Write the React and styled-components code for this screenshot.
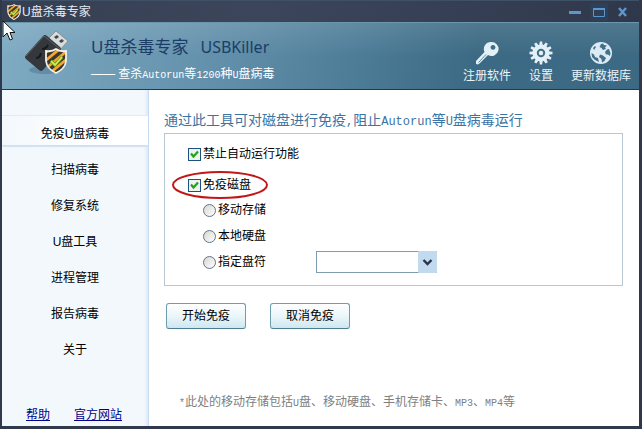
import { useState } from 'react';
import styled, { createGlobalStyle } from 'styled-components';

const GlobalStyle = createGlobalStyle`
	* {
		box-sizing: border-box;
	}

	body {
		margin: 0;
		background: #2f394b;
		color: #000;
		font-family: 'Liberation Sans', 'Noto Sans CJK SC', sans-serif;
		font-size: 12px;
		line-height: 16px;
	}
`;

const Frame = styled.div`
	display: flex;
	flex-direction: column;
	min-height: 100vh;
	border: solid #2f394b;
	border-width: 0 3px 3px 2px;
`;

const TitleBar = styled.div`
	display: flex;
	align-items: center;
	gap: 1px;
	height: 22px;
	padding: 0 7px 0 5px;
	border-top: 1px solid #3f5166;
	background: linear-gradient(90deg, #363f52, #3d455a 40%, #363e53 75%, #2f384b);
	color: #e4edf6;
`;

const WindowButtons = styled.div`
	display: flex;
	gap: 6px;
	margin-left: auto;
`;

const WindowButton = styled.button`
	display: flex;
	align-items: center;
	justify-content: center;
	width: 18px;
	height: 18px;
	padding: 0;
	border: 0;
	background: ${({ $shaded }) => ($shaded ? '#303f58' : 'transparent')};
`;

const Banner = styled.header`
	display: flex;
	align-items: flex-start;
	height: 68px;
	padding: 6px 8px 0 20px;
	border-top: 1px solid #6b98a8;
	border-bottom: 1px solid #1e3a4e;
	background:
		linear-gradient(rgb(255 255 255 / 10%), rgb(255 255 255 / 0%) 50%),
		linear-gradient(100deg, #7fabc3, #5f8ca7 38%, #4d7c97 56%, #3c6983 74%);
`;

const BannerText = styled.div`
	display: flex;
	flex-direction: column;
	gap: 9px;
	margin: 8px 0 0 21px;
`;

const ProductName = styled.h1`
	display: flex;
	gap: 12px;
	margin: 0;
	color: #1b3d68;
	font-family: 'Noto Sans', 'Noto Sans CJK SC', sans-serif;
	font-size: 16px;
	font-weight: 400;
	line-height: 20px;
`;

const ChineseName = styled.span`
	font-size: 17px;
`;

const Slogan = styled.p`
	margin: 0;
	color: #fff;
`;

const Latin = styled.span`
	font-family: 'Liberation Mono', monospace;
	font-size: ${({ $large }) => ($large ? 12 : 10)}px;
	line-height: 1;
`;

const Tools = styled.nav`
	display: flex;
	gap: 18px;
	margin: 12px 0 0 auto;
`;

const ToolButton = styled.button`
	display: flex;
	flex-direction: column;
	align-items: center;
	gap: 3px;
	padding: 0;
	border: 0;
	background: none;
	color: #eaf4fa;
	font: inherit;
`;

const Main = styled.div`
	display: flex;
	flex: 1;
`;

const Sidebar = styled.aside`
	display: flex;
	flex: none;
	flex-direction: column;
	width: 147px;
	padding-top: 26px;
	border-right: 1px solid #c6dcf2;
	background: linear-gradient(270deg, #dceaf8, #f3f8fc 4px);
`;

const Menu = styled.ul`
	display: flex;
	flex-direction: column;
	gap: 6px;
	margin: 0;
	padding: 0;
	list-style: none;
`;

const MenuItem = styled.button`
	display: block;
	width: 100%;
	height: 30px;
	padding: 7px 0 0;
	border: solid transparent;
	border-width: 0 0 1px;
	border-bottom-color: ${({ $active }) => ($active ? '#cfe0f4' : 'transparent')};
	background: ${({ $active }) => ($active ? 'linear-gradient(90deg, #f3f8fc, #fff 60%)' : 'none')};
	box-shadow: ${({ $active }) => ($active ? '0 -1px #e3ebf2, 0 2px 1px -1px #d3e3f5' : 'none')};
	color: #000;
	font: inherit;
	text-align: center;
`;

const HelpLinks = styled.div`
	display: flex;
	gap: 24px;
	margin-top: auto;
	padding: 0 0 3px 24px;

	a {
		color: #00008b;
	}
`;

const Content = styled.main`
	flex: 1;
	padding: 20px 16px 15px 15px;
	background: #fff;
`;

const Heading = styled.h2`
	margin: 0 0 3px;
	color: #3b74a3;
	font-size: 14px;
	font-weight: 400;
	line-height: 20px;
`;

const Options = styled.div`
	display: flex;
	flex-direction: column;
	padding: 12px 23px;
	border: 1px solid #b9c7d3;
`;

const Option = styled.label`
	display: flex;
	align-items: center;
	gap: 2px;
`;

const CircledOption = styled.div`
	position: relative;
	align-self: flex-start;
	margin: 15px 0 6px;
`;

const RedCircle = styled.svg`
	position: absolute;
	left: -17px;
	top: -7px;
	pointer-events: none;
`;

const Checkbox = styled.input`
	appearance: none;
	width: 13px;
	height: 13px;
	margin: 0;
	border: 1px solid #1c5180;
	background: #eef3ee;

	&:checked {
		background: #eef3ee
			url("data:image/svg+xml,%3Csvg xmlns='http://www.w3.org/2000/svg' width='11' height='11'%3E%3Cpath d='M2 4.500l2.500 3 4.500-5' fill='none' stroke='%2321a121' stroke-width='2.2'/%3E%3C/svg%3E");
	}
`;

const DiskOptions = styled.div`
	display: flex;
	flex-direction: column;
	gap: 4px;
	padding-left: 15px;
`;

const DiskRow = styled.div`
	display: flex;
	align-items: center;
	height: 22px;
`;

const Radio = styled.input`
	appearance: none;
	width: 13px;
	height: 13px;
	margin: 0;
	border: 1px solid #5f7688;
	border-radius: 50%;
	background: linear-gradient(135deg, #d6d6d1, #fff);

	&:checked {
		background: radial-gradient(#21a121 3px, #f0f0ee 4px);
	}
`;

const DriveField = styled.div`
	display: grid;
	width: 121px;
	margin-left: 50px;
`;

const DriveSelect = styled.select`
	grid-area: 1 / 1;
	appearance: none;
	height: 22px;
	border: 1px solid #7f9db0;
	border-radius: 0;
	background: #fff;
`;

const DriveArrow = styled.svg`
	grid-area: 1 / 1;
	justify-self: end;
	pointer-events: none;
`;

const Actions = styled.div`
	display: flex;
	gap: 24px;
	margin-top: 17px;
	padding-left: 2px;
`;

const ActionButton = styled.button`
	width: 80px;
	height: 26px;
	padding: 0;
	border: 1px solid #6c9fae;
	border-bottom-color: #4d7e92;
	border-radius: 3px;
	background: linear-gradient(#fff, #eaf6fa 50%, #cfe7f0);
	color: #000;
	font: inherit;
`;

const Note = styled.p`
	margin: 65px 0 0 15px;
	color: #808080;
`;

const Pointer = styled.svg`
	position: absolute;
	left: 2px;
	top: 20px;
	pointer-events: none;
`;

const SHIELD = 'M0 2Q6 3 10 0Q14 3 20 2V12Q19 20 10 24Q1 20 0 12Z';

function Shield({ id }) {
	return (
		<>
			<clipPath id={id}>
				<path d={SHIELD} />
			</clipPath>
			<g clipPath={`url(#${id})`}>
				<path d='M0 0h20v24H0z' fill='#f5a82c' />
				<path d='M-2 9L11-2M-2 17L22-3M-2 25L22 5M4 28L22 13' stroke='#3c3830' strokeWidth='3.4' />
			</g>
			<path d='M5 12l4 4 7-8' fill='none' stroke='#6c9a20' strokeWidth='3.4' />
			<path d='M5 12l4 4 7-8' fill='none' stroke='#cbee58' strokeWidth='1.8' />
			<path d={SHIELD} fill='none' stroke='#f2f2ea' strokeWidth='1.8' />
		</>
	);
}

function UsbLogo() {
	return (
		<svg width='48' height='48' viewBox='0 0 48 48' aria-hidden='true'>
			<ellipse cx='23' cy='41' rx='16' ry='4' fill='#2f566c' opacity='.3' />
			<path d='M25 11L34 2L46 12L37 22Z' fill='#d9dcdd' stroke='#8a9296' />
			<path d='M32 8l3-2 2 2-3 2zM37 12l3-2 2 2-3 2z' fill='#424649' />
			<path d='M4 26L21 7Q23 5 25 7L38 18Q40 20 38 22L21 41Q19 43 17 41L4 30Q2 28 4 26Z' fill='#34373b' />
			<path d='M4 27L22 7L38 20' fill='none' stroke='#5d6468' />
			<path d='M14 29q4 0 5-5M20 20q4 0 6-4' fill='none' stroke='#17191c' strokeWidth='2' />
			<g transform='translate(24 20)'>
				<Shield id='logo-shield' />
			</g>
		</svg>
	);
}

function KeyIcon() {
	return (
		<svg width='24' height='24' viewBox='0 0 24 24' aria-hidden='true'>
			<path
				fill='#e3f0f7'
				fillRule='evenodd'
				d='M16 1a7 7 0 1 1-3 13L5 22L3 23.500L1 23V20L9.500 11A7 7 0 0 1 16 1ZM18 4a2.400 2.400 0 1 0 .01 0Z'
			/>
			<path d='M3.500 21.500L11 13.500' stroke='#5f8ba3' />
		</svg>
	);
}

function GearIcon() {
	const teeth = Array.from({ length: 12 }, (_, i) => i * 30);

	return (
		<svg width='24' height='24' viewBox='-12 -12 24 24' aria-hidden='true'>
			{teeth.map((angle) => (
				<path key={angle} d='M-1.8-7L-1.2-11.5H1.2L1.8-7Z' fill='#e3f0f7' transform={`rotate(${angle})`} />
			))}
			<circle r='8.4' fill='#e3f0f7' />
			<circle r='3.2' fill='none' stroke='#41708a' strokeWidth='2' />
		</svg>
	);
}

function GlobeIcon() {
	return (
		<svg width='24' height='24' viewBox='0 0 24 24' aria-hidden='true'>
			<circle cx='12' cy='12' r='11' fill='#dcebf3' />
			<path
				fill='#426f8a'
				d='M12 3L14 2.500L15 4L18 4.500L16 6.500L17 8L14 9L12.500 7L10.500 6ZM2.500 12L5 13.500L6 16L9 17L10 21L6 19L3 16ZM18 8.500L20 8L21.500 12L21 15L19 13.500L17 13.500L16 11ZM11 13.500L14 14.500L17 17L15.500 20L13 21.500L12.500 18L10 16ZM4 7L6 5L7 6L5 9Z'
			/>
		</svg>
	);
}

const menu = ['免疫U盘病毒', '扫描病毒', '修复系统', 'U盘工具', '进程管理', '报告病毒', '关于'];
const disks = ['移动存储', '本地硬盘', '指定盘符'];

export default function App() {
	const [active, setActive] = useState(menu[0]);

	return (
		<Frame>
			<GlobalStyle />
			<TitleBar>
				<svg width='14' height='16' viewBox='-1 -1 22 26' aria-hidden='true'>
					<Shield id='title-shield' />
				</svg>
				<span>U盘杀毒专家</span>
				<WindowButtons>
					<WindowButton aria-label='最小化'>
						<svg width='12' height='12'>
							<path d='M0 5h12v3H0z' fill='#5b97cd' />
						</svg>
					</WindowButton>
					<WindowButton aria-label='最大化' $shaded>
						<svg width='12' height='12'>
							<path d='M.5 2v8.500h11V2' fill='none' stroke='#5b97cd' />
							<path d='M0 2h12v2H0z' fill='#5b97cd' />
						</svg>
					</WindowButton>
					<WindowButton aria-label='关闭'>
						<svg width='12' height='12'>
							<path d='M2 2l7 8M9 2l-7 8' stroke='#5b97cd' strokeWidth='2.4' />
						</svg>
					</WindowButton>
				</WindowButtons>
			</TitleBar>

			<Banner>
				<UsbLogo />
				<BannerText>
					<ProductName>
						<ChineseName>U盘杀毒专家</ChineseName>
						<span>USBKiller</span>
					</ProductName>
					<Slogan>
						—— 查杀<Latin>Autorun</Latin>等<Latin>1200</Latin>种<Latin>U</Latin>盘病毒
					</Slogan>
				</BannerText>
				<Tools>
					<ToolButton>
						<KeyIcon />
						注册软件
					</ToolButton>
					<ToolButton>
						<GearIcon />
						设置
					</ToolButton>
					<ToolButton>
						<GlobeIcon />
						更新数据库
					</ToolButton>
				</Tools>
			</Banner>

			<Main>
				<Sidebar>
					<Menu>
						{menu.map((item) => (
							<li key={item}>
								<MenuItem $active={item === active} onClick={() => setActive(item)}>
									{item}
								</MenuItem>
							</li>
						))}
					</Menu>
					<HelpLinks>
						<a href='#help'>帮助</a>
						<a href='#site'>官方网站</a>
					</HelpLinks>
				</Sidebar>

				<Content>
					<Heading>
						通过此工具可对磁盘进行免疫<Latin $large>,</Latin>阻止<Latin $large>Autorun</Latin>等
						<Latin $large>U</Latin>盘病毒运行
					</Heading>
					<Options>
						<Option>
							<Checkbox type='checkbox' defaultChecked />
							禁止自动运行功能
						</Option>
						<CircledOption>
							<Option>
								<Checkbox type='checkbox' defaultChecked />
								免疫磁盘
							</Option>
							<RedCircle width='98' height='30' aria-hidden='true'>
								<ellipse cx='49' cy='15' rx='47' ry='13' fill='none' stroke='#c01818' strokeWidth='2' />
							</RedCircle>
						</CircledOption>
						<DiskOptions>
							{disks.map((disk) => (
								<DiskRow key={disk}>
									<Option>
										<Radio type='radio' name='disk' />
										{disk}
									</Option>
									{disk === '指定盘符' && (
										<DriveField>
											<DriveSelect aria-label='盘符' />
											<DriveArrow width='19' height='22' aria-hidden='true'>
												<rect width='19' height='22' rx='1' fill='#c2daef' />
												<path d='M5.500 9l4 4 4-4' fill='none' stroke='#263545' strokeWidth='2.4' />
											</DriveArrow>
										</DriveField>
									)}
								</DiskRow>
							))}
						</DiskOptions>
					</Options>
					<Actions>
						<ActionButton>开始免疫</ActionButton>
						<ActionButton>取消免疫</ActionButton>
					</Actions>
					<Note>
						<Latin>*</Latin>此处的移动存储包括<Latin>U</Latin>盘、移动硬盘、手机存储卡、<Latin>MP3</Latin>、
						<Latin>MP4</Latin>等
					</Note>
				</Content>
			</Main>

			<Pointer width='14' height='22' viewBox='0 0 14 22' aria-hidden='true'>
				<path d='M1 1V17L5 13L8 20L10.500 19L8 12.500H13Z' fill='#fff' stroke='#111' />
			</Pointer>
		</Frame>
	);
}
